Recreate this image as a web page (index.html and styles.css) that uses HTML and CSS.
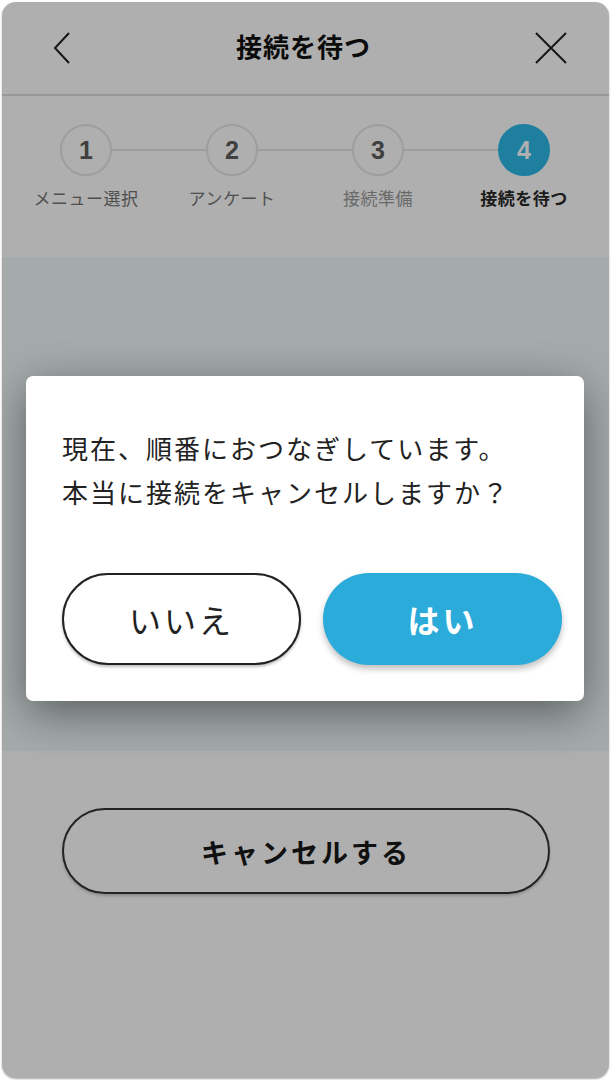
FILE: index.html
```html
<!DOCTYPE html>
<html lang="ja">
<head>
    <meta charset="UTF-8">
    <meta name="viewport" content="width=device-width, initial-scale=1.0">
    <title>接続を待つ</title>
    <link rel="stylesheet" href="styles.css">
</head>
<body>
    <div class="phone">
        <header class="topbar">
            <button class="icon-btn back" aria-label="戻る">
                <svg width="20" height="34" viewBox="0 0 20 34"><polyline points="17,2 3,17 17,32" fill="none" stroke="#222" stroke-width="2"/></svg>
            </button>
            <h1 class="title">接続を待つ</h1>
            <button class="icon-btn close" aria-label="閉じる">
                <svg width="32" height="32" viewBox="0 0 32 32"><path d="M1 1 L31 31 M31 1 L1 31" fill="none" stroke="#222" stroke-width="2"/></svg>
            </button>
        </header>

        <div class="steps">
            <div class="track">
                <span class="circle">1</span>
                <span class="line"></span>
                <span class="circle">2</span>
                <span class="line"></span>
                <span class="circle">3</span>
                <span class="line"></span>
                <span class="circle active">4</span>
            </div>
            <div class="labels">
                <span class="label done">メニュー選択</span>
                <span class="label done">アンケート</span>
                <span class="label">接続準備</span>
                <span class="label current">接続を待つ</span>
            </div>
        </div>

        <div class="content"></div>

        <div class="actions">
            <button class="cancel-btn">キャンセルする</button>
        </div>

        <div class="overlay"></div>

        <div class="dialog">
            <p class="message">現在、順番におつなぎしています。<br>本当に接続をキャンセルしますか？</p>
            <div class="dialog-buttons">
                <button class="btn no">いいえ</button>
                <button class="btn yes">はい</button>
            </div>
        </div>
    </div>
</body>
</html>
```

FILE: styles.css
```css
body {
    margin: 0;
    background-color: #fff;
    font-family: "Noto Sans CJK JP", "Noto Sans", sans-serif;
}
.phone {
    position: relative;
    margin: 2px;
    width: 607px;
    height: 1076px;
    border-radius: 14px;
    overflow: hidden;
    background-color: #fff;
    box-shadow: 0 1px 2px rgba(0,0,0,0.35);
}
.topbar {
    height: 92px;
    border-bottom: 2px solid #dedede;
    display: flex;
    align-items: center;
    justify-content: space-between;
    padding: 0 42px 0 50px;
}
.icon-btn {
    background: none;
    border: none;
    padding: 0;
    display: flex;
}
.title {
    margin: 0 0 5px;
    font-size: 26px;
    font-weight: bold;
    letter-spacing: 1px;
    color: #111;
}
.steps {
    padding: 28px 11px 0;
}
.track {
    display: flex;
    align-items: center;
    padding-left: 47px;
}
.circle {
    width: 48px;
    height: 48px;
    border: 2px solid #e6e6e6;
    border-radius: 50%;
    display: flex;
    align-items: center;
    justify-content: center;
    font-family: "Liberation Sans", Arial, sans-serif;
    font-weight: bold;
    font-size: 25px;
    color: #5e5e5e;
}
.circle.active {
    border-color: #2cb9e8;
    background-color: #2cb9e8;
    color: #fff;
}
.line {
    width: 94px;
    height: 2px;
    background-color: #e3e3e3;
}
.labels {
    display: grid;
    grid-template-columns: repeat(4, 146px);
    margin-top: 11px;
}
.label {
    text-align: center;
    font-size: 17px;
    line-height: 22px;
    letter-spacing: 0.5px;
    color: #9a9a9a;
}
.label.done {
    color: #747474;
}
.label.current {
    color: #2a2a2a;
    font-weight: bold;
}
.content {
    margin-top: 48px;
    height: 494px;
    background-color: #f1f9f9;
}
.actions {
    padding: 57px 59px 0 60px;
}
.cancel-btn {
    width: 100%;
    height: 86px;
    border: 2px solid #333;
    border-radius: 43px;
    background-color: #fff;
    font-family: inherit;
    font-size: 27px;
    font-weight: bold;
    letter-spacing: 3px;
    color: #181818;
    box-shadow: 0 2px 3px rgba(0,0,0,0.2);
}
.overlay {
    position: absolute;
    inset: 0;
    background-color: rgba(0,0,0,0.314);
}
.dialog {
    position: absolute;
    top: 374px;
    left: 24px;
    width: 558px;
    height: 325px;
    box-sizing: border-box;
    padding: 50px 22px 0 36px;
    background-color: #fff;
    border-radius: 7px;
    box-shadow: 0 12px 45px rgba(0,0,0,0.45);
}
.message {
    margin: 0;
    font-size: 26px;
    line-height: 44px;
    letter-spacing: 2px;
    color: #222;
}
.dialog-buttons {
    display: flex;
    gap: 22px;
    margin-top: 59px;
}
.btn {
    width: 239px;
    height: 92px;
    border-radius: 46px;
    font-family: inherit;
    font-size: 32px;
    letter-spacing: 3px;
}
.btn.no {
    border: 2px solid #222;
    background-color: #fff;
    color: #222;
    box-shadow: 0 2px 3px rgba(0,0,0,0.25);
}
.btn.yes {
    border: none;
    background-color: #2aabd9;
    color: #fff;
    font-weight: bold;
    box-shadow: 0 4px 6px rgba(0,0,0,0.25);
}
```
